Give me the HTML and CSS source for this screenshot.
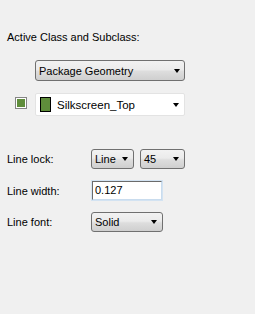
FILE: index.html
```html
<!DOCTYPE html>
<html lang="en">
<head>
<meta charset="UTF-8">
<title>Options</title>
<link rel="stylesheet" href="styles.css">
</head>
<body>
<div class="panel">
  <div class="title">Active Class and Subclass:</div>

  <div class="class-row">
    <div class="combo wide">
      <span>Package Geometry</span>
      <span class="arrow"></span>
    </div>
  </div>

  <div class="subclass-row">
    <span class="mini-swatch"><span class="mini-fill"></span></span>
    <div class="subclass-box">
      <span class="swatch"></span>
      <span class="subclass-name">Silkscreen_Top</span>
      <span class="arrow"></span>
    </div>
  </div>

  <div class="fields">
    <div class="field lock">
      <span class="label">Line lock:</span>
      <div class="combo line">
        <span>Line</span>
        <span class="arrow"></span>
      </div>
      <div class="combo angle">
        <span>45</span>
        <span class="arrow"></span>
      </div>
    </div>
    <div class="field width">
      <span class="label">Line width:</span>
      <div class="textbox">0.127</div>
    </div>
    <div class="field font">
      <span class="label">Line font:</span>
      <div class="combo solid">
        <span>Solid</span>
        <span class="arrow"></span>
      </div>
    </div>
  </div>
</div>
</body>
</html>
```

FILE: styles.css
```css
body {
  margin: 0;
  background-color: #f0f0f0;
  font-family: "Liberation Sans", Arial, sans-serif;
  font-size: 11px;
  color: #000;
}
.panel {
  padding: 31px 0 0 7px;
}
.title {
  height: 13px;
  line-height: 13px;
  margin-bottom: 16px;
}
.class-row {
  padding-left: 28px;
}
.combo {
  box-sizing: border-box;
  height: 20px;
  display: flex;
  align-items: center;
  justify-content: space-between;
  padding: 0 5px 0 3px;
  border: 1px solid #707070;
  border-radius: 3px;
  background: linear-gradient(#f2f2f2, #ebebeb 45%, #dddddd 55%, #cfcfcf);
}
.combo.wide {
  width: 150px;
  height: 21px;
  padding-right: 4px;
}
.arrow {
  width: 0;
  height: 0;
  border-left: 3.5px solid transparent;
  border-right: 3.5px solid transparent;
  border-top: 4px solid #000;
}
.subclass-row {
  display: flex;
  align-items: flex-start;
  margin-top: 12px;
}
.mini-swatch {
  box-sizing: border-box;
  width: 12px;
  height: 12px;
  margin: 4px 8px 0 8px;
  border: 1px solid #858585;
  background-color: #fff;
  padding: 1px;
  display: flex;
}
.mini-fill {
  flex: 1;
  background-color: #5f8d3b;
}
.subclass-box {
  box-sizing: border-box;
  width: 150px;
  height: 23px;
  display: flex;
  align-items: center;
  padding: 0 5px 0 4px;
  border: 1px solid #e3e3e3;
  border-radius: 2px;
  background-color: #fff;
}
.swatch {
  box-sizing: border-box;
  width: 11px;
  height: 15px;
  border: 1px solid #000;
  background-color: #5f8d3b;
}
.subclass-name {
  flex: 1;
  margin-left: 6px;
  font-size: 11.5px;
}
.fields {
  margin-top: 33px;
  display: flex;
  flex-direction: column;
  gap: 12px;
}
.field {
  display: flex;
  align-items: center;
}
.label {
  width: 84px;
}
.combo.line {
  width: 43px;
}
.combo.angle {
  width: 45px;
  margin-left: 6px;
}
.combo.solid {
  width: 72px;
}
.textbox {
  box-sizing: border-box;
  width: 70px;
  height: 19px;
  margin-left: 1px;
  line-height: 17px;
  padding-left: 2px;
  border: 1px solid;
  border-color: #6b6b6b #c9dcee #c9dcee #6b6b6b;
  box-shadow: 0 0 0 1px #d3e3f2;
  background-color: #fff;
}
```
